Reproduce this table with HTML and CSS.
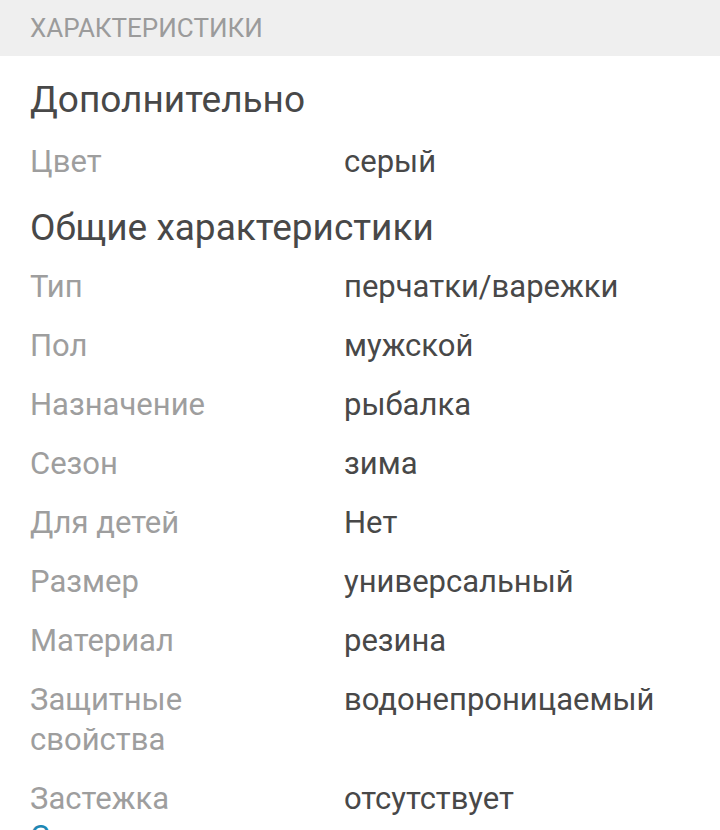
FILE: index.html
```html
<!DOCTYPE html>
<html lang="ru">
<head>
<meta charset="utf-8">
<link rel="stylesheet" href="styles.css">
</head>
<body>
<div class="section-title">ХАРАКТЕРИСТИКИ</div>
<div class="content">
  <h2 class="group group-first">Дополнительно</h2>
  <div class="row"><div class="label">Цвет</div><div class="value">серый</div></div>
  <h2 class="group">Общие характеристики</h2>
  <div class="row"><div class="label">Тип</div><div class="value">перчатки/варежки</div></div>
  <div class="row"><div class="label">Пол</div><div class="value">мужской</div></div>
  <div class="row"><div class="label">Назначение</div><div class="value">рыбалка</div></div>
  <div class="row"><div class="label">Сезон</div><div class="value">зима</div></div>
  <div class="row"><div class="label">Для детей</div><div class="value">Нет</div></div>
  <div class="row"><div class="label">Размер</div><div class="value">универсальный</div></div>
  <div class="row"><div class="label">Материал</div><div class="value">резина</div></div>
  <div class="row"><div class="label">Защитные свойства</div><div class="value">водонепроницаемый</div></div>
  <div class="row"><div class="label">Застежка</div><div class="value">отсутствует</div></div>
  <a class="more" href="#">Скрыть</a>
</div>
</body>
</html>
```

FILE: styles.css
```css
html, body {
  margin: 0;
  padding: 0;
  background: #ffffff;
  font-family: Roboto, "Noto Sans", sans-serif;
  overflow: hidden;
}
.section-title {
  background: #efefef;
  height: 56px;
  box-sizing: border-box;
  padding: 8px 30px 0;
  font-size: 26px;
  line-height: 40px;
  color: #9b9b9b;
}
.content {
  padding: 0 30px;
}
.group {
  margin: 14.5px 0 7.5px;
  font-weight: 400;
  font-size: 37px;
  line-height: 44px;
  color: #484848;
}
.group-first {
  margin-top: 22px;
  margin-bottom: 10.5px;
}
.row {
  display: grid;
  grid-template-columns: 314px 1fr;
  padding: 9.5px 0;
  font-size: 31px;
  line-height: 40px;
}
.label {
  color: #9e9e9e;
  padding-right: 100px;
}
.value {
  color: #484848;
}
.more {
  display: block;
  color: #1e88b4;
  text-decoration: none;
  font-size: 31px;
  line-height: 16px;
}
```
